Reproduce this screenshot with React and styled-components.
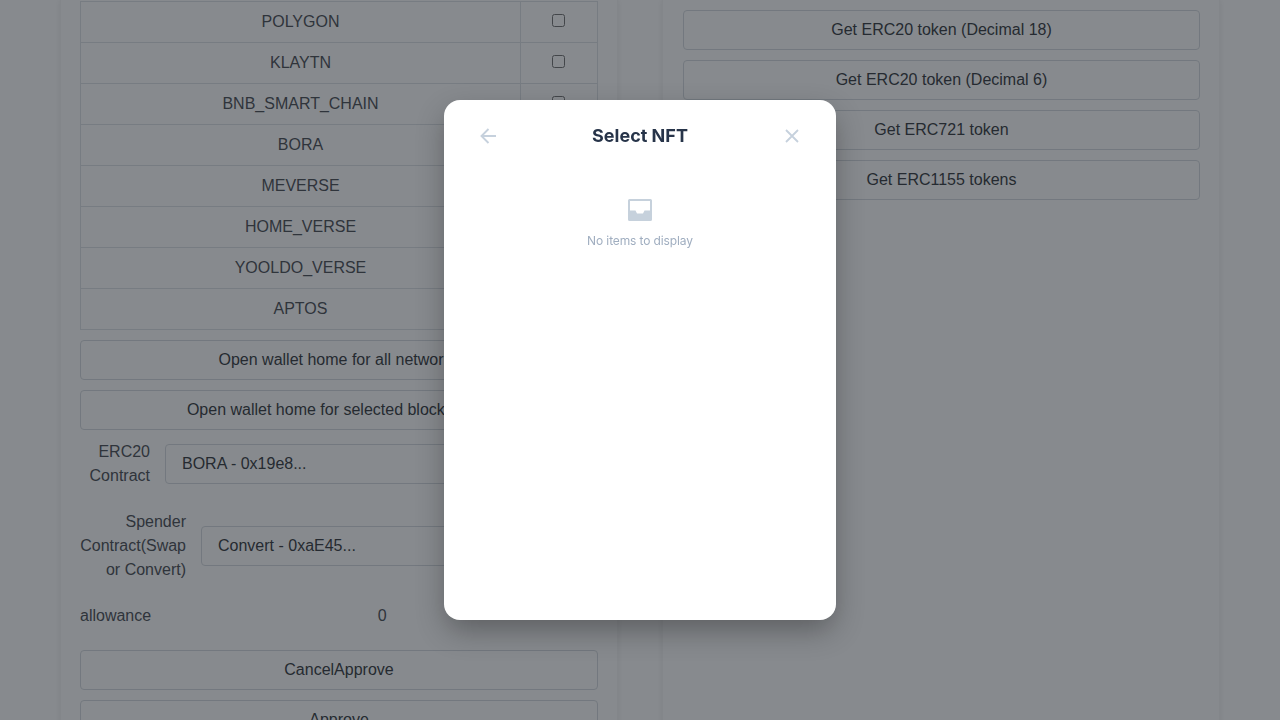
import React from "react";
import styled, { createGlobalStyle } from "styled-components";

const Global = createGlobalStyle`
  html, body { margin: 0; padding: 0; height: 720px; overflow: hidden; background: #fff; }
  body { font-family: "Liberation Sans", Arial, sans-serif; font-size: 16px; line-height: 24px; color: #4f5359; }
  * { box-sizing: border-box; }
`;

const Page = styled.div`
  display: flex;
  gap: 44px;
  height: 720px;
  overflow: hidden;
  padding: 0 60px;
`;

const Card = styled.section`
  flex: 0 0 558px;
  min-width: 0;
  height: 900px;
  padding: ${(p) => p.$top}px 19px 0;
  box-shadow: 0 0 6px rgba(0, 0, 0, 0.08);
  border-left: 1px solid rgba(0, 0, 0, 0.03);
  border-right: 1px solid rgba(0, 0, 0, 0.03);
`;

const RightCard = styled(Card)`
  padding-left: 20px;
  padding-right: 19px;
`;

const Table = styled.table`
  width: 518px;
  border-collapse: collapse;
  margin-bottom: 10px;
`;

const Cell = styled.td`
  border: 1px solid #dee2e6;
  height: 41px;
  padding: 8px 9px 8px 8px;
  text-align: center;
`;

const NameCell = styled(Cell)`
  width: 440px;
  padding: 8px;
`;

const Check = styled.input.attrs({ type: "checkbox" })`
  width: 13px;
  height: 13px;
  display: block;
  margin: 0 auto 3px;
  appearance: none;
  border: 1px solid #767676;
  border-radius: 2.5px;
  background: #fff;
`;

const Button = styled.button`
  display: block;
  width: 100%;
  height: 40px;
  margin-bottom: 10px;
  padding: 0 12px;
  font: inherit;
  color: #3a3e44;
  background: #fff;
  border: 1px solid #d6dbe0;
  border-radius: 4px;
  text-align: center;
`;

const CutButton = styled(Button)`
  margin-bottom: 0;
`;

const FieldRow = styled.div`
  display: flex;
  align-items: center;
  gap: 15px;
  margin-bottom: 22px;
`;

const Label = styled.label`
  flex: 0 0 ${(p) => p.$w}px;
  text-align: right;
`;

const Select = styled.div`
  flex: 1;
  height: 40px;
  padding: 0 16px;
  display: flex;
  align-items: center;
  color: #3a3e44;
  background: #fff;
  border: 1px solid #d6dbe0;
  border-radius: 4px;
`;

const AllowanceRow = styled.div`
  display: flex;
  margin-bottom: 22px;
`;

const AllowanceValue = styled.span`
  flex: 1;
  padding-left: 15px;
  text-align: center;
`;

const Overlay = styled.div`
  position: fixed;
  inset: 0;
  display: flex;
  align-items: center;
  justify-content: center;
  background: rgba(15, 21, 29, 0.5);
`;

const Modal = styled.div`
  width: 392px;
  height: 520px;
  padding: 24px 36px;
  background: #fff;
  border-radius: 16px;
  box-shadow: 0 12px 30px -2px rgba(0, 0, 0, 0.32);
  font-family: Inter, sans-serif;
`;

const ModalHeader = styled.header`
  display: flex;
  align-items: center;
  justify-content: space-between;
  height: 24px;
`;

const IconButton = styled.span`
  display: flex;
  width: 16px;
  height: 16px;
`;

const Title = styled.h2`
  margin: 0;
  font-size: 18px;
  line-height: 24px;
  font-weight: 700;
  color: #273449;
`;

const Empty = styled.div`
  display: flex;
  flex-direction: column;
  align-items: center;
  margin-top: 51px;
`;

const EmptyText = styled.p`
  margin: 12px 0 0;
  font-size: 12px;
  letter-spacing: -0.12px;
  line-height: 16px;
  color: #a0aec0;
`;

const rows = ["POLYGON", "KLAYTN", "BNB_SMART_CHAIN", "BORA", "MEVERSE", "HOME_VERSE", "YOOLDO_VERSE", "APTOS"];

export default function App() {
  return (
    <>
      <Global />
      <Page>
        <Card $top={1}>
          <Table>
            <tbody>
              {rows.map((r) => (
                <tr key={r}>
                  <NameCell>{r}</NameCell>
                  <Cell><Check /></Cell>
                </tr>
              ))}
            </tbody>
          </Table>
          <Button>Open wallet home for all networks</Button>
          <Button>Open wallet home for selected blockchains</Button>
          <FieldRow>
            <Label $w={70}>ERC20 Contract</Label>
            <Select>BORA - 0x19e8...</Select>
          </FieldRow>
          <FieldRow>
            <Label $w={106}>Spender Contract(Swap or Convert)</Label>
            <Select>Convert - 0xaE45...</Select>
          </FieldRow>
          <AllowanceRow>
            <span>allowance</span>
            <AllowanceValue>0</AllowanceValue>
          </AllowanceRow>
          <Button>CancelApprove</Button>
          <CutButton>Approve</CutButton>
        </Card>
        <RightCard $top={10}>
          <Button>Get ERC20 token (Decimal 18)</Button>
          <Button>Get ERC20 token (Decimal 6)</Button>
          <Button>Get ERC721 token</Button>
          <Button>Get ERC1155 tokens</Button>
        </RightCard>
      </Page>
      <Overlay>
        <Modal>
          <ModalHeader>
            <IconButton>
              <svg width="16" height="16" viewBox="0 0 16 16" fill="none" stroke="#c6d1dd" strokeWidth="1.9">
                <path d="M16 8H1.5M8.5 1 1.5 8l7 7" />
              </svg>
            </IconButton>
            <Title>Select NFT</Title>
            <IconButton>
              <svg width="16" height="16" viewBox="0 0 16 16" fill="none" stroke="#c6d1dd" strokeWidth="1.8">
                <path d="M2 2l12 12M14 2 2 14" />
              </svg>
            </IconButton>
          </ModalHeader>
          <Empty>
            <svg width="24" height="22" viewBox="0 0 24 22">
              <path
                fill="#c6d1dc"
                fillRule="evenodd"
                d="M1.5 0h21A1.5 1.5 0 0 1 24 1.5v19a1.5 1.5 0 0 1-1.5 1.5h-21A1.5 1.5 0 0 1 0 20.5v-19A1.5 1.5 0 0 1 1.5 0zM2 2v9.5h5.5L9 14.5h6l1.5-3H22V2z"
              />
            </svg>
            <EmptyText>No items to display</EmptyText>
          </Empty>
        </Modal>
      </Overlay>
    </>
  );
}
